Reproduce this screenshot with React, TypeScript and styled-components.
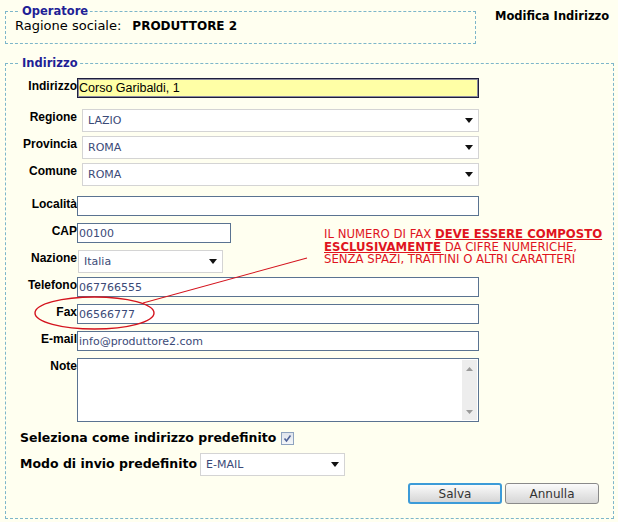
import styled, { createGlobalStyle } from 'styled-components'

const GlobalStyle = createGlobalStyle`
  html, body {
    margin: 0;
    background: #fffff0;
  }
  body {
    font-family: "DejaVu Sans", Verdana, sans-serif;
    color: #000;
  }
`

const Page = styled.div`
  position: relative;
  width: 618px;
  height: 522px;
  box-sizing: border-box;
  padding: 4px 5px 0 5px;
`

const TopRow = styled.div`
  display: flex;
  align-items: flex-start;
  gap: 19px;
`

const Box = styled.fieldset<{ $width: number }>`
  width: ${(p) => p.$width}px;
  box-sizing: border-box;
  min-width: 0;
  margin: 0;
  border: 1px dashed #7db6ca;
`

const OperatorBox = styled(Box)`
  padding: 0 9px 9px 9px;
`

const AddressBox = styled(Box)`
  margin-top: 12px;
  padding: 8px 14px 14px 14px;
`

const Legend = styled.legend<{ $indent?: number }>`
  font: bold 11.5px/14px "DejaVu Sans", Verdana, sans-serif;
  color: #1f1f96;
  padding: 0 2px;
  margin-left: ${(p) => p.$indent ?? 0}px;
`

const InfoLine = styled.div`
  font-size: 13px;
  line-height: 16px;
`

const Strong = styled.b`
  font-size: 12px;
  margin-left: 11px;
`

const PageTitle = styled.div`
  margin-top: 6px;
  font: bold 11.5px/13px "DejaVu Sans", Verdana, sans-serif;
  white-space: nowrap;
`

const Row = styled.div<{ $space?: number }>`
  display: flex;
  align-items: flex-start;
  min-height: 27px;
  margin-top: ${(p) => p.$space ?? 0}px;
`

const Label = styled.label`
  width: 57px;
  flex: none;
  margin-top: 1px;
  text-align: right;
  font: bold 12px/14px "Liberation Sans", Arial, sans-serif;
  white-space: nowrap;
`

const TextInput = styled.input<{ $width: number; $highlight?: boolean }>`
  width: ${(p) => p.$width}px;
  height: 20px;
  box-sizing: border-box;
  margin: 0;
  padding: 0 1px;
  border: 1px solid ${(p) => (p.$highlight ? '#1e1e3c' : '#5a7391')};
  box-shadow: ${(p) => (p.$highlight ? 'inset 0 0 0 1px #8a8a9e' : 'none')};
  background: ${(p) => (p.$highlight ? '#ffffa6' : '#fff')};
  font: ${(p) =>
    p.$highlight
      ? '12.5px "Liberation Sans", Arial, sans-serif'
      : '11px "DejaVu Sans", Verdana, sans-serif'};
  color: ${(p) => (p.$highlight ? '#000' : '#3b4a78')};
  outline: none;
`

const SelectBox = styled.div<{ $width: number; $indent?: number }>`
  width: ${(p) => p.$width}px;
  height: 23px;
  box-sizing: border-box;
  margin-left: ${(p) => p.$indent ?? 0}px;
  padding: 0 5px 0 5px;
  display: flex;
  align-items: center;
  justify-content: space-between;
  border: 1px solid #d4d4d4;
  background: #fff;
  font: 11px "DejaVu Sans", Verdana, sans-serif;
  color: #3b4a78;
`

const Arrow = () => (
  <svg width="8" height="5" viewBox="0 0 8 5">
    <path d="M0 0 H8 L4 5 Z" fill="#111" />
  </svg>
)

const Select = ({ value, width, indent }: { value: string; width: number; indent?: number }) => (
  <SelectBox $width={width} $indent={indent}>
    <span>{value}</span>
    <Arrow />
  </SelectBox>
)

const NoteArea = styled.div`
  width: 402px;
  height: 64px;
  box-sizing: border-box;
  border: 1px solid #5a7391;
  background: #fff;
  display: flex;
  justify-content: flex-end;
  padding: 1px;
`

const ScrollTrack = styled.div`
  width: 15px;
  background: #ededed;
  display: flex;
  flex-direction: column;
  justify-content: space-between;
  align-items: center;
  padding: 7px 0 6px;
`

const ScrollArrow = ({ up }: { up?: boolean }) => (
  <svg width="7" height="4" viewBox="0 0 7 4">
    <path d={up ? 'M0 4 L3.5 0 L7 4 Z' : 'M0 0 H7 L3.5 4 Z'} fill="#9a9a9a" />
  </svg>
)

const OptionRow = styled.div<{ $space: number }>`
  display: flex;
  align-items: baseline;
  margin-top: ${(p) => p.$space}px;
  font: bold 12.5px/16px "DejaVu Sans", Verdana, sans-serif;
  white-space: nowrap;
`

const CheckRow = styled(OptionRow)`
  align-items: center;
  gap: 5px;
`

const ModeRow = styled(OptionRow)`
  gap: 3px;
`

const CheckBox = styled.span`
  width: 13px;
  height: 13px;
  box-sizing: border-box;
  border: 1px solid #8ea3bf;
  background: linear-gradient(#dfe4ec, #f4f6f9);
  display: inline-flex;
  align-items: center;
  justify-content: center;
`

const Actions = styled.div`
  display: flex;
  justify-content: flex-end;
  gap: 3px;
  margin-top: 7px;
`

const Button = styled.button<{ $focused?: boolean }>`
  width: 94px;
  height: 21px;
  box-sizing: border-box;
  padding: 0;
  border: ${(p) => (p.$focused ? '2px solid #3c9bd8' : '1px solid #8a8a8a')};
  border-radius: 3px;
  background: linear-gradient(#fbfbfb, #e6e6e6 55%, #d6d6d6);
  font: 12px "DejaVu Sans", Verdana, sans-serif;
  color: #333;
`

const Overlay = styled.svg`
  position: absolute;
  left: 0;
  top: 0;
  pointer-events: none;
`

const Warning = styled.div`
  position: absolute;
  left: 324px;
  top: 228px;
  font: 11.7px/12.5px "DejaVu Sans", Tahoma, sans-serif;
  color: #e0141e;
  white-space: nowrap;
`

const WarnStrong = styled.b`
  text-decoration: underline;
`

export default function App() {
  return (
    <Page>
      <GlobalStyle />
      <TopRow>
        <OperatorBox $width={471}>
          <Legend $indent={5}>Operatore</Legend>
          <InfoLine>
            Ragione sociale:<Strong>PRODUTTORE 2</Strong>
          </InfoLine>
        </OperatorBox>
        <PageTitle>Modifica Indirizzo</PageTitle>
      </TopRow>

      <AddressBox $width={609}>
        <Legend>Indirizzo</Legend>
        <Row>
          <Label>Indirizzo</Label>
          <TextInput $width={402} $highlight readOnly value="Corso Garibaldi, 1" />
        </Row>
        <Row $space={4}>
          <Label>Regione</Label>
          <Select value="LAZIO" width={397} indent={5} />
        </Row>
        <Row>
          <Label>Provincia</Label>
          <Select value="ROMA" width={397} indent={5} />
        </Row>
        <Row>
          <Label>Comune</Label>
          <Select value="ROMA" width={397} indent={5} />
        </Row>
        <Row $space={6}>
          <Label>Località</Label>
          <TextInput $width={402} readOnly value="" />
        </Row>
        <Row>
          <Label>CAP</Label>
          <TextInput $width={154} readOnly value="00100" />
        </Row>
        <Row>
          <Label>Nazione</Label>
          <Select value="Italia" width={145} indent={1} />
        </Row>
        <Row>
          <Label>Telefono</Label>
          <TextInput $width={402} readOnly value="067766555" />
        </Row>
        <Row>
          <Label>Fax</Label>
          <TextInput $width={402} readOnly value="06566777" />
        </Row>
        <Row>
          <Label>E-mail</Label>
          <TextInput $width={402} readOnly value="info@produttore2.com" />
        </Row>
        <Row>
          <Label>Note</Label>
          <NoteArea>
            <ScrollTrack>
              <ScrollArrow up />
              <ScrollArrow />
            </ScrollTrack>
          </NoteArea>
        </Row>

        <CheckRow $space={8}>
          Seleziona come indirizzo predefinito
          <CheckBox>
            <svg width="9" height="9" viewBox="0 0 9 9">
              <path d="M1.5 4.5 L3.5 7 L7.5 1.5" fill="none" stroke="#4f6398" strokeWidth="1.6" />
            </svg>
          </CheckBox>
        </CheckRow>
        <ModeRow $space={7}>
          Modo di invio predefinito
          <Select value="E-MAIL" width={145} />
        </ModeRow>

        <Actions>
          <Button $focused>Salva</Button>
          <Button>Annulla</Button>
        </Actions>
      </AddressBox>

      <Overlay width="618" height="522" viewBox="0 0 618 522">
        <ellipse cx="94.5" cy="313" rx="59.5" ry="16" fill="none" stroke="#d4141e" strokeWidth="1.4" />
        <line x1="143" y1="303" x2="307" y2="258" stroke="#d4141e" strokeWidth="1.1" />
      </Overlay>

      <Warning>
        IL NUMERO DI FAX <WarnStrong>DEVE ESSERE COMPOSTO</WarnStrong>
        <br />
        <WarnStrong>ESCLUSIVAMENTE</WarnStrong> DA CIFRE NUMERICHE,
        <br />
        SENZA SPAZI, TRATTINI O ALTRI CARATTERI
      </Warning>
    </Page>
  )
}
